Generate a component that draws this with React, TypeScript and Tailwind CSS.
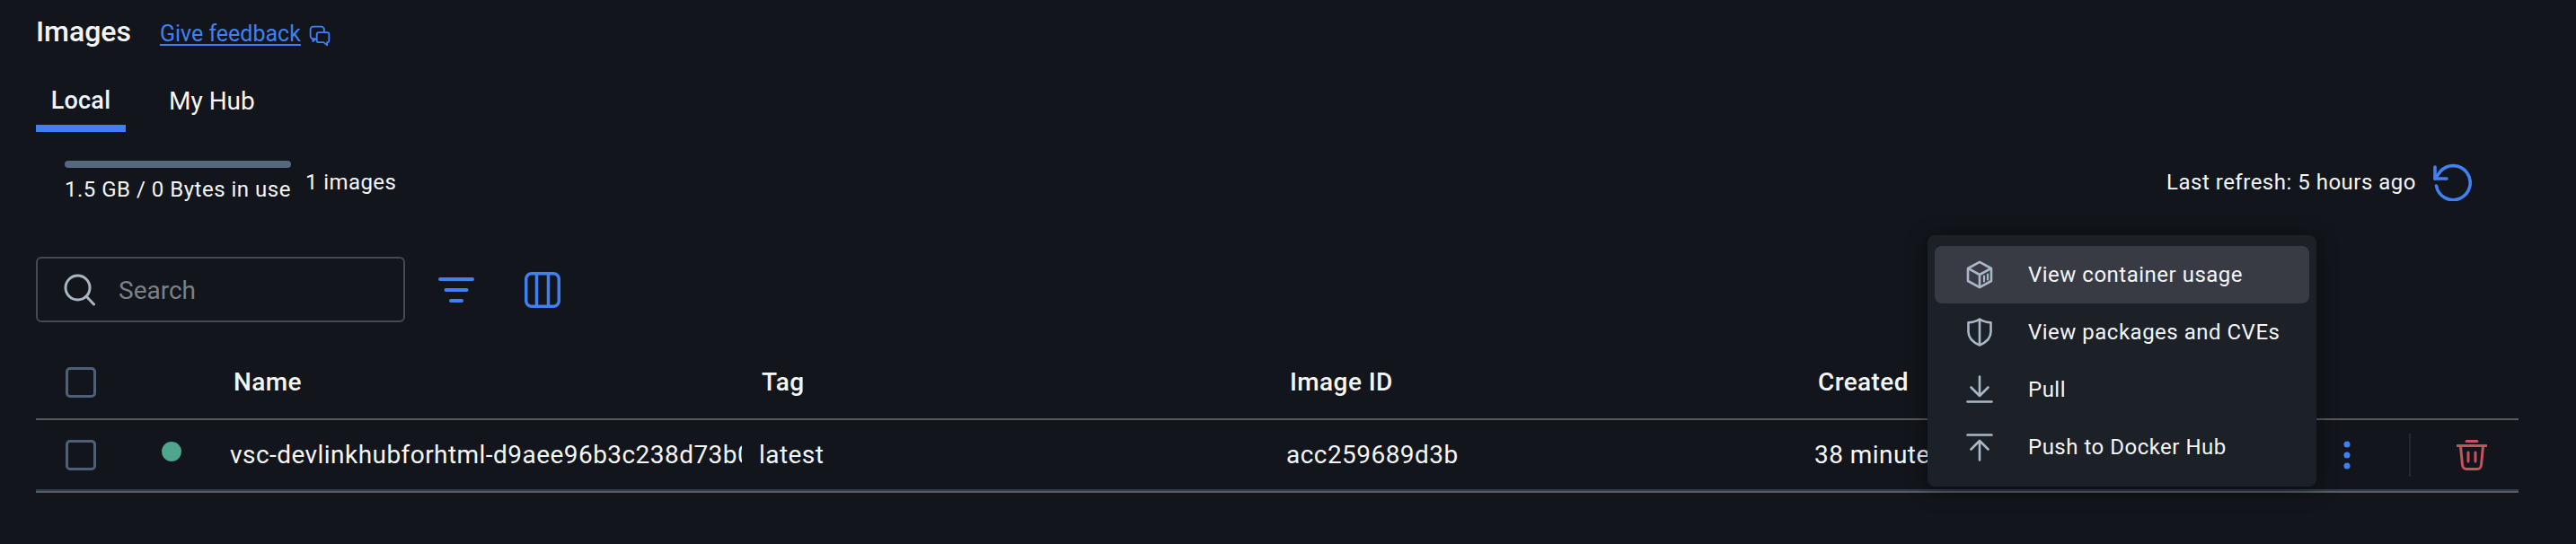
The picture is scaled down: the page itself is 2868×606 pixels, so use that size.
import React from 'react';

const menuItems = [
  { label: 'View container usage', icon: <BoxIcon />, active: true },
  { label: 'View packages and CVEs', icon: <ShieldIcon />, active: false },
  { label: 'Pull', icon: <PullIcon />, active: false },
  { label: 'Push to Docker Hub', icon: <PushIcon />, active: false },
];

function BoxIcon() {
  return (
    <svg width="30" height="32" viewBox="0 0 30 32" fill="none" stroke="#a9b8c6" strokeWidth="2.6" strokeLinejoin="round" strokeLinecap="round">
      <path d="M15 1.800 28 9v14l-13 7.200L2 23V9z" />
      <path d="M2.500 9.200 15 16l12.500-6.800M15 16v13.500" />
      <path d="M20 17.500v6M24 15.500v6" strokeWidth="2.200" />
    </svg>
  );
}

function ShieldIcon() {
  return (
    <svg width="30" height="32" viewBox="0 0 30 32" fill="none" stroke="#a9b8c6" strokeWidth="2.600" strokeLinejoin="round" strokeLinecap="round">
      <path d="M15 1.500c3.500 2.400 7.600 3.600 12.500 3.800v10.200c0 6.500-4.600 11.600-12.500 15-7.900-3.400-12.500-8.500-12.500-15V5.300C7.400 5.100 11.500 3.900 15 1.500z" />
      <path d="M15 2v28" />
    </svg>
  );
}

function PullIcon() {
  return (
    <svg width="30" height="32" viewBox="0 0 30 32" fill="none" stroke="#a9b8c6" strokeWidth="2.600" strokeLinecap="round" strokeLinejoin="round">
      <path d="M15 1.500v21M5.500 13.500l9.500 9.500 9.500-9.500M1.500 29.500h27" />
    </svg>
  );
}

function PushIcon() {
  return (
    <svg width="30" height="32" viewBox="0 0 30 32" fill="none" stroke="#a9b8c6" strokeWidth="2.600" strokeLinecap="round" strokeLinejoin="round">
      <path d="M15 30.500v-21M5.500 18.500 15 9l9.500 9.500M1.500 2.500h27" />
    </svg>
  );
}

function FeedbackIcon() {
  return (
    <svg width="24" height="24" viewBox="0 0 22 22" fill="none" stroke="#4080f0" strokeWidth="1.700" strokeLinejoin="round">
      <path d="M7 14H4.500A3 3 0 0 1 1.500 11V4.500a3 3 0 0 1 3-3h8a3 3 0 0 1 3 3V7" />
      <path d="M10 7.500h8.500a2 2 0 0 1 2 2v6a2 2 0 0 1-2 2v3l-3.500-3h-5a2 2 0 0 1-2-2v-6a2 2 0 0 1 2-2z" />
      <path d="M4 14v2.500L7 14" />
    </svg>
  );
}

function Checkbox() {
  return <div className="w-[34px] h-[34px] rounded-[5px] border-[3px] border-[#4e6079]" />;
}

export default function App() {
  return (
    <div className="relative w-[2868px] h-[606px] overflow-hidden bg-[#12151b] text-[#f4f5f6] font-['Roboto',sans-serif] text-[24px]">
      <div className="flex items-baseline h-[64px] pl-10 pt-[15px]">
        <span className="text-[32px] leading-[40px] font-medium">Images</span>
        <a className="ml-[32px] text-[25px] text-[#4080f0] underline underline-offset-[3px]">Give feedback</a>
        <span className="ml-[9px] self-center">
          <FeedbackIcon />
        </span>
      </div>

      <div className="flex ml-10 h-[83px]">
        <div className="w-[100px] h-[83px] border-b-[8px] border-[#4080f0] flex items-center justify-center pt-[22px] text-[27px] tracking-[0.2px] font-medium">Local</div>
        <div className="ml-[48px] flex items-center pt-[14px] h-[83px] text-[28px]">My Hub</div>
      </div>

      <div className="flex items-start justify-between pl-[72px] pr-[116px] pt-[32px] h-[139px]">
        <div className="flex items-start">
          <div className="flex flex-col">
            <div className="h-2 w-[252px] rounded-full bg-[#56687f]" />
            <div className="mt-[8px] text-[24px] leading-[32px] tracking-[0.5px]">1.5 GB / 0 Bytes in use</div>
          </div>
          <div className="ml-[16px] mt-[8px] text-[24px] leading-[32px] tracking-[0.4px]">1 images</div>
        </div>
        <div className="flex items-center mt-[3px]">
          <span className="tracking-[0.5px] mr-[18px]">Last refresh: 5 hours ago</span>
          <svg width="44" height="42" viewBox="0 0 44 42" fill="none" stroke="#4080f0" strokeWidth="3.600" strokeLinecap="round" strokeLinejoin="round">
            <path d="M4.500 25A19 19 0 1 0 9 9L3 17" />
            <path d="M3 4v13h13" />
          </svg>
        </div>
      </div>

      <div className="flex items-center ml-10 h-[73px]">
        <div className="flex items-center w-[411px] h-[73px] rounded-[6px] border-2 border-[#46494f] pl-[29px]">
          <svg width="36" height="36" viewBox="0 0 36 36" fill="none" stroke="#a9b5c1" strokeWidth="3" strokeLinecap="round">
            <circle cx="15.500" cy="15.500" r="13.500" />
            <path d="m25 25 8.500 9" />
          </svg>
          <span className="ml-[25px] pt-[2px] text-[#7b8087] text-[28px]">Search</span>
        </div>
        <svg className="ml-[37px]" width="40" height="28" viewBox="0 0 40 28" fill="#4080f0">
          <rect x="0" y="0" width="40" height="4" rx="2" />
          <rect x="6.500" y="12" width="27" height="4" rx="2" />
          <rect x="12" y="24" width="16" height="4" rx="2" />
        </svg>
        <svg className="ml-[56px]" width="40" height="40" viewBox="0 0 40 40" fill="none" stroke="#4080f0" strokeWidth="3.500">
          <rect x="1.750" y="1.750" width="36.500" height="36.500" rx="6" />
          <path d="M13.500 2v36M26.500 2v36" />
        </svg>
      </div>

      <div className="mx-10 w-[2764px] mt-[27px]">
        <div className="grid grid-cols-[140px_76px_589px_587px_588px_1fr] items-center h-[80px] border-b-2 border-[#5a5a5a] font-medium text-[28px] tracking-[0.4px] box-content">
          <div className="pl-[33px]">
            <Checkbox />
          </div>
          <div />
          <div className="pl-[4px]">Name</div>
          <div className="pl-[3px]">Tag</div>
          <div className="pl-[4px]">Image ID</div>
          <div className="pl-[4px]">Created</div>
        </div>
        <div className="grid grid-cols-[140px_76px_589px_587px_588px_1fr] items-center h-[77px] border-b-2 border-[#2f3d50] box-content text-[28px] tracking-[0.45px]">
          <div className="pl-[33px]">
            <Checkbox />
          </div>
          <div className="-mt-[7px]">
            <div className="w-[22px] h-[22px] rounded-full bg-[#4fa58e]" />
          </div>
          <div className="w-[570px] overflow-hidden whitespace-nowrap">vsc-devlinkhubforhtml-d9aee96b3c238d73b0e8a1f4</div>
          <div>latest</div>
          <div>acc259689d3b</div>
          <div className="flex items-center justify-between pr-[35px]">
            <span>38 minutes ago</span>
            <div className="flex items-center">
              <svg width="8" height="32" viewBox="0 0 8 32" fill="#4080f0">
                <circle cx="4" cy="4" r="3.500" />
                <circle cx="4" cy="16" r="3.500" />
                <circle cx="4" cy="28" r="3.500" />
              </svg>
              <div className="ml-[65px] w-[2px] h-[48px] bg-[#24282e]" />
              <svg className="ml-[51px]" width="34" height="34" viewBox="0 0 34 34" fill="none" stroke="#c9505f" strokeWidth="3" strokeLinecap="round" strokeLinejoin="round">
                <path d="M11 1.500h12M1 6.500h32" />
                <path d="M4.500 7l2 21c.2 2.500 2 4.500 4.500 4.500h12c2.500 0 4.300-2 4.500-4.500l2-21" />
                <path d="M13 14v10M21 14v10" />
              </svg>
            </div>
          </div>
        </div>
        <div className="h-[2px] bg-[#5a5a5a]" />
      </div>

      <div className="absolute left-[2146px] top-[262px] w-[433px] h-[280px] rounded-[8px] bg-[#1c2027] p-2 py-3 shadow-[0_4px_24px_rgba(0,0,0,0.45)]">
        {menuItems.map((item) => (
          <div key={item.label} className={`flex items-center h-[64px] rounded-[8px] pl-[35px] ${item.active ? 'bg-[#383b44]' : ''}`}>
            <span className="w-[30px] flex justify-center shrink-0">{item.icon}</span>
            <span className="ml-[39px] text-[24px] tracking-[0.5px]">{item.label}</span>
          </div>
        ))}
      </div>
    </div>
  );
}
